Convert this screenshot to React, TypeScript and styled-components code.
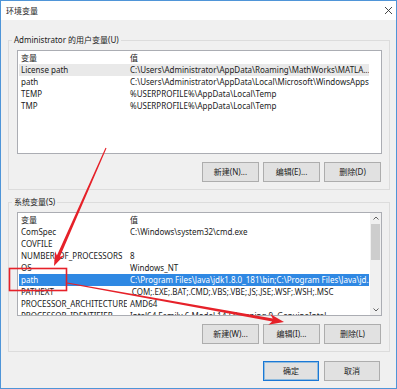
import React from "react";
import styled, { createGlobalStyle } from "styled-components";

const Global = createGlobalStyle`
  html, body { margin: 0; padding: 0; background: #ffffff; overflow: hidden; }
  body { font-family: "Noto Sans", "Noto Sans CJK SC", sans-serif; }
`;

const Stage = styled.div`
  position: relative;
  width: 397px;
  height: 389px;
`;

const Window = styled.div`
  width: 397px;
  height: 389px;
  box-sizing: border-box;
  border: 1px solid #4f95d8;
  display: flex;
  flex-direction: column;
  background: #f0f0f0;
  font-family: "Noto Sans", "Noto Sans CJK SC", sans-serif;
  font-size: 8px;
  color: #1b1b1b;
`;

const TitleBar = styled.div`
  height: 19px;
  flex-shrink: 0;
  background: #ffffff;
  display: flex;
  align-items: center;
  justify-content: space-between;
  padding: 0 3px 0 5px;
  font-size: 8px;
  line-height: 12px;
`;

const CloseGlyph = styled.svg`
  width: 9px;
  height: 9px;
  display: block;
`;

const Body = styled.div`
  flex: 1;
  display: flex;
  flex-direction: column;
  padding: 14px 6px 0 7px;
`;

const Group = styled.fieldset<{ $gap: number }>`
  margin: ${(p) => p.$gap}px 0 0 0;
  padding: 4px 7px 7px 8px;
  border: 1px solid #dcdcdc;
  min-width: 0;
  display: flex;
  flex-direction: column;
`;

const Caption = styled.legend`
  margin-left: -5px;
  padding: 0 2px;
  line-height: 12px;
  font-size: 8px;
`;

const ListBox = styled.div`
  height: 104px;
  box-sizing: border-box;
  border: 1px solid #abadb3;
  background: #ffffff;
  display: flex;
  overflow: hidden;
`;

const Rows = styled.div`
  flex: 1;
  padding-left: 1px;
  display: flex;
  flex-direction: column;
  overflow: hidden;
`;

const Header = styled.div`
  height: 13px;
  width: 350px;
  flex-shrink: 0;
  display: flex;
  align-items: center;
  line-height: 12px;
`;

const Row = styled.div<{ $state?: "focus" | "dim" }>`
  height: 12px;
  width: 350px;
  flex-shrink: 0;
  display: flex;
  align-items: center;
  line-height: 12px;
  white-space: nowrap;
  background: ${(p) =>
    p.$state === "focus" ? "#2f88e3" : p.$state === "dim" ? "#e9e9e9" : "transparent"};
  color: ${(p) => (p.$state === "focus" ? "#ffffff" : "inherit")};
`;

const NameCell = styled.div`
  width: 108px;
  flex-shrink: 0;
  padding-left: 2px;
  box-sizing: border-box;
  overflow: hidden;
`;

const ValueCell = styled.div`
  flex: 1;
  padding-left: 3px;
  overflow: hidden;
  white-space: nowrap;
`;

const Scrollbar = styled.div`
  width: 11px;
  flex-shrink: 0;
  background: #f0f0f0;
  display: flex;
  flex-direction: column;
`;

const ScrollArrow = styled.div`
  height: 10px;
  display: flex;
  align-items: center;
  justify-content: center;
`;

const Track = styled.div`
  flex: 1;
  display: flex;
  flex-direction: column;
  padding-top: 1px;
`;

const Thumb = styled.div`
  height: 36px;
  margin: 0 1px;
  background: #cdcdcd;
`;

const ButtonRow = styled.div`
  display: flex;
  justify-content: flex-end;
  gap: 4px;
  margin-top: 8px;
  padding-right: 1px;
`;

const Button = styled.button<{ $primary?: boolean; $w?: number }>`
  width: ${(p) => p.$w ?? 57}px;
  height: 20px;
  box-sizing: border-box;
  margin: 0;
  padding: 0;
  background: #e1e1e1;
  border: 1px solid ${(p) => (p.$primary ? "#1a78d6" : "#adadad")};
  box-shadow: ${(p) => (p.$primary ? "inset 0 0 0 1px rgba(0,120,215,0.35)" : "none")};
  font-family: "Noto Sans", "Noto Sans CJK SC", sans-serif;
  font-size: 8px;
  line-height: 12px;
  color: #1b1b1b;
`;

const Footer = styled.div`
  display: flex;
  justify-content: flex-end;
  gap: 5px;
  padding: 9px 10px 0 0;
`;

const Overlay = styled.svg`
  position: absolute;
  left: 0;
  top: 0;
  width: 397px;
  height: 389px;
  pointer-events: none;
`;

type Item = { name: string; value: string; state?: "focus" | "dim" };

const userVars: Item[] = [
  { name: "License path", value: "C:\\Users\\Administrator\\AppData\\Roaming\\MathWorks\\MATLA...", state: "dim" },
  { name: "path", value: "C:\\Users\\Administrator\\AppData\\Local\\Microsoft\\WindowsApps" },
  { name: "TEMP", value: "%USERPROFILE%\\AppData\\Local\\Temp" },
  { name: "TMP", value: "%USERPROFILE%\\AppData\\Local\\Temp" },
];

const sysVars: Item[] = [
  { name: "ComSpec", value: "C:\\Windows\\system32\\cmd.exe" },
  { name: "COVFILE", value: "" },
  { name: "NUMBER_OF_PROCESSORS", value: "8" },
  { name: "OS", value: "Windows_NT" },
  { name: "path", value: "C:\\Program Files\\Java\\jdk1.8.0_181\\bin;C:\\Program Files\\Java\\jd...", state: "focus" },
  { name: "PATHEXT", value: ".COM;.EXE;.BAT;.CMD;.VBS;.VBE;.JS;.JSE;.WSF;.WSH;.MSC" },
  { name: "PROCESSOR_ARCHITECTURE", value: "AMD64" },
  { name: "PROCESSOR_IDENTIFIER", value: "Intel64 Family 6 Model 142 Stepping 9, GenuineIntel" },
];

function VarList({ items, scroll }: { items: Item[]; scroll?: boolean }) {
  return (
    <ListBox>
      <Rows>
        <Header>
          <NameCell>变量</NameCell>
          <ValueCell>值</ValueCell>
        </Header>
        {items.map((it) => (
          <Row key={it.name + it.value} $state={it.state}>
            <NameCell>{it.name}</NameCell>
            <ValueCell>{it.value}</ValueCell>
          </Row>
        ))}
      </Rows>
      {scroll && (
        <Scrollbar>
          <ScrollArrow>
            <svg width="6" height="4" viewBox="0 0 6 4">
              <path d="M0.5 3.5 L3 1 L5.5 3.5" fill="none" stroke="#606060" strokeWidth="1" />
            </svg>
          </ScrollArrow>
          <Track>
            <Thumb />
          </Track>
          <ScrollArrow>
            <svg width="6" height="4" viewBox="0 0 6 4">
              <path d="M0.5 0.5 L3 3 L5.5 0.5" fill="none" stroke="#606060" strokeWidth="1" />
            </svg>
          </ScrollArrow>
        </Scrollbar>
      )}
    </ListBox>
  );
}

function arrow(
  sx: number, sy: number, tx: number, ty: number,
  w0: number, w1: number, headLen: number, headHalf: number
) {
  const dx = tx - sx;
  const dy = ty - sy;
  const len = Math.hypot(dx, dy);
  const ux = dx / len;
  const uy = dy / len;
  const nx = -uy;
  const ny = ux;
  const bx = tx - ux * headLen;
  const by = ty - uy * headLen;
  const cx = tx - ux * headLen * 0.78;
  const cy = ty - uy * headLen * 0.78;
  const pts = [
    [sx + nx * w0, sy + ny * w0],
    [cx + nx * w1, cy + ny * w1],
    [bx + nx * headHalf, by + ny * headHalf],
    [tx, ty],
    [bx - nx * headHalf, by - ny * headHalf],
    [cx - nx * w1, cy - ny * w1],
    [sx - nx * w0, sy - ny * w0],
  ];
  return pts.map((p) => `${p[0].toFixed(1)},${p[1].toFixed(1)}`).join(" ");
}

export default function App() {
  const red = "#e62129";
  return (
    <>
      <Global />
      <Stage>
        <Window>
          <TitleBar>
            <span>环境变量</span>
            <CloseGlyph viewBox="0 0 9 9">
              <path d="M1 1 L8 8 M8 1 L1 8" stroke="#333" strokeWidth="0.9" />
            </CloseGlyph>
          </TitleBar>
          <Body>
            <Group $gap={0}>
              <Caption>Administrator 的用户变量(U)</Caption>
              <VarList items={userVars} />
              <ButtonRow>
                <Button>新建(N)...</Button>
                <Button>编辑(E)...</Button>
                <Button>删除(D)</Button>
              </ButtonRow>
            </Group>
            <Group $gap={6}>
              <Caption>系统变量(S)</Caption>
              <VarList items={sysVars} scroll />
              <ButtonRow>
                <Button>新建(W)...</Button>
                <Button>编辑(I)...</Button>
                <Button>删除(L)</Button>
              </ButtonRow>
            </Group>
            <Footer>
              <Button $primary $w={56}>确定</Button>
              <Button $w={56}>取消</Button>
            </Footer>
          </Body>
        </Window>
        <Overlay viewBox="0 0 397 389">
          <rect x="9.5" y="268.5" width="57" height="22" fill="none" stroke={red} strokeWidth="1.6" />
          <polygon points={arrow(106, 148, 54, 266, 0.5, 1.6, 14, 5)} fill={red} />
          <polygon points={arrow(67, 283, 284, 322, 0.4, 1.6, 15, 5.5)} fill={red} />
        </Overlay>
      </Stage>
    </>
  );
}
